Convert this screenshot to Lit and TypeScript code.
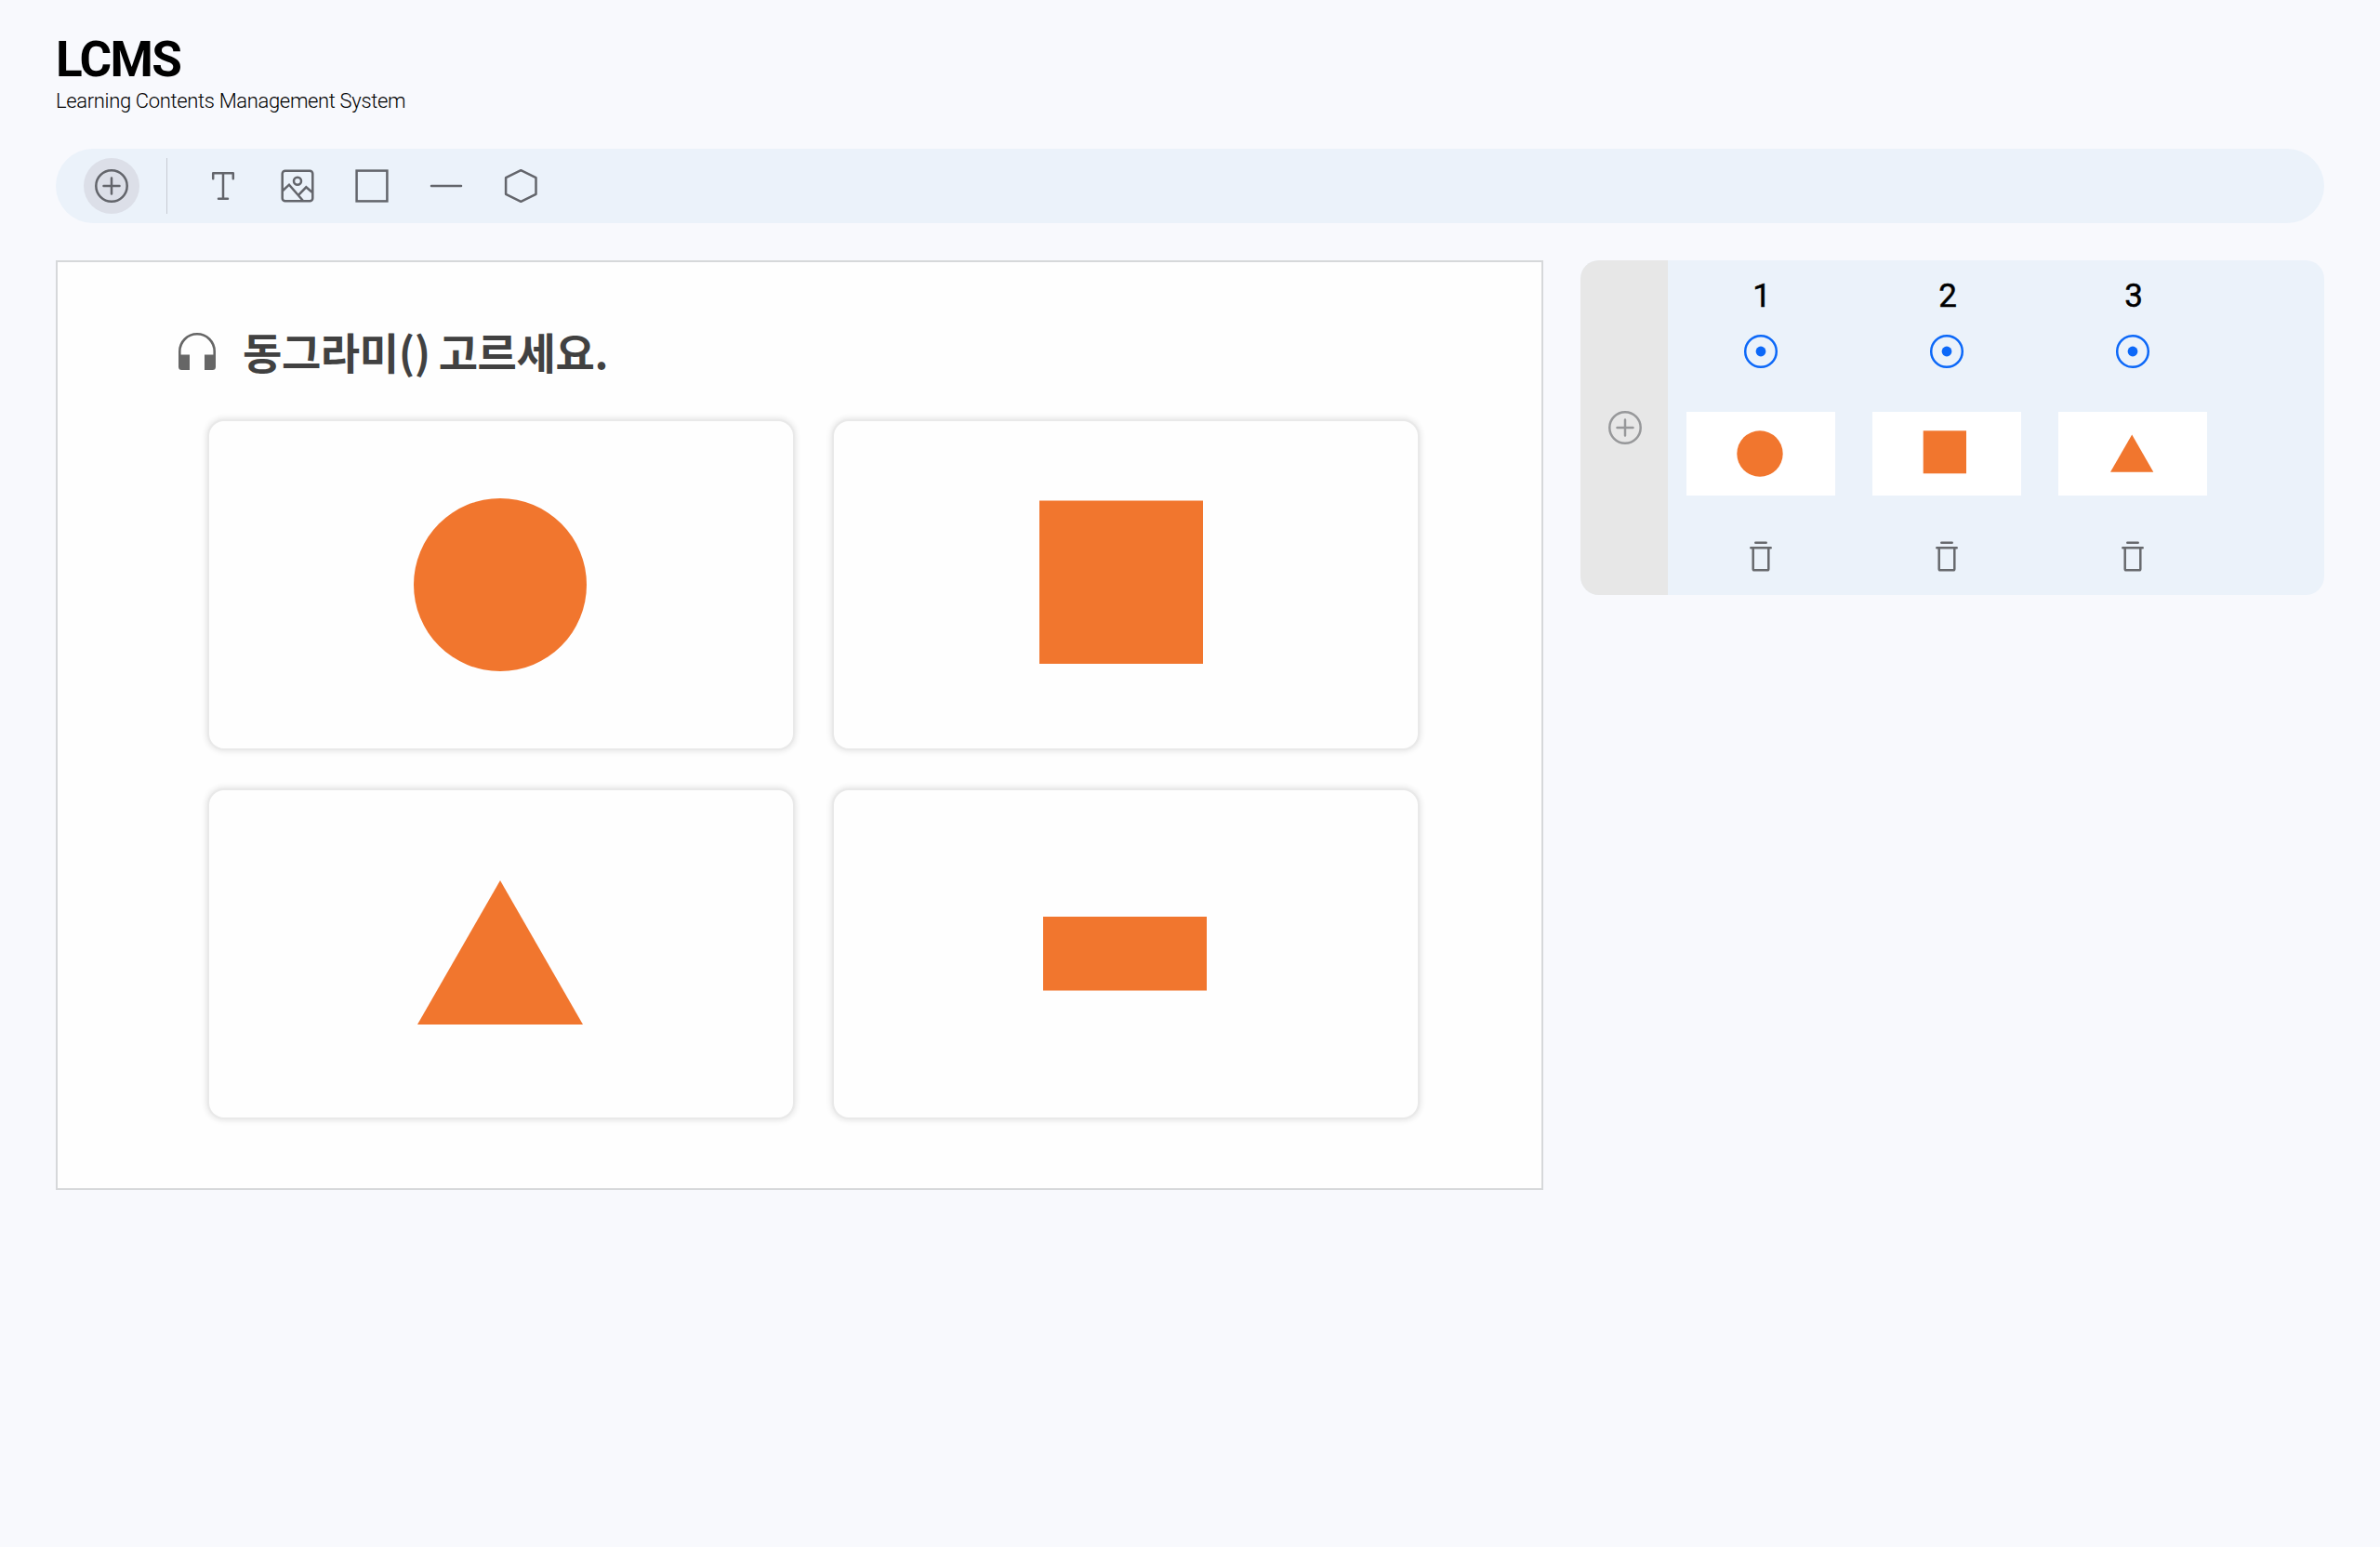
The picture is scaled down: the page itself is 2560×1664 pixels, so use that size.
import { LitElement, html, svg, css, type TemplateResult } from "lit";
import { customElement, property } from "lit/decorators.js";

type ShapeName = "circle" | "square" | "triangle" | "rect";

// Every shape is drawn inside the 628 x 352 face of an answer card.
const SHAPES: Record<ShapeName, TemplateResult> = {
  circle: svg`<circle cx="313" cy="176" r="93"/>`,
  square: svg`<rect x="221" y="85.500" width="176" height="175.500"/>`,
  triangle: svg`<path d="M313 97 402 252H224z"/>`,
  rect: svg`<rect x="225" y="136" width="176" height="79.500"/>`,
};

// Thumbnails use a 160 x 90 face of their own.
const THUMBS: Record<string, TemplateResult> = {
  circle: svg`<circle cx="79" cy="45" r="24.7"/>`,
  square: svg`<rect x="54.7" y="20.3" width="46.3" height="46"/>`,
  triangle: svg`<path d="M79.2 24.5 102.3 64.7H56z"/>`,
};

const ICONS: Record<string, TemplateResult> = {
  plus: svg`<circle cx="20" cy="20" r="16.7"/><path d="M20 11.5v17M11.5 20h17" stroke-linecap="round"/>`,
  text: svg`<path d="M9.2 12.2V6.2H30.8V12.2M20 6.2V33.8M15 33.8H25" stroke-linecap="round" stroke-linejoin="round"/>`,
  image: svg`<rect x="3.7" y="3.7" width="32.6" height="32.6" rx="3"/><circle cx="20" cy="14.7" r="4"/><path d="M4.2 25 11 18.7 25.8 35.8M21.5 29.3 29.3 21.3 36 27"/>`,
  box: svg`<rect x="3.6" y="3.6" width="32.8" height="32.8"/>`,
  line: svg`<path d="M4 20H36" stroke-linecap="round"/>`,
  hexagon: svg`<path d="M20.300 3.2 36.5 11.2V28.8L20.300 36.8 4.1 28.8V11.2z" stroke-linejoin="round"/>`,
  target: svg`<circle cx="20" cy="20" r="16.8"/><circle cx="20" cy="20" r="5.4" fill="currentColor" stroke="none"/>`,
  trash: svg`<path d="M14.3 5.7H25.7M9.3 11.2H30.7M11.7 11.4V34a1.3 1.3 0 0 0 1.3 1.3H27a1.3 1.3 0 0 0 1.3-1.3V11.4" stroke-linecap="round"/>`,
};

@customElement("lcms-icon")
export class LcmsIcon extends LitElement {
  @property() name = "plus";
  static styles = css`
    :host { display: block; width: 40px; height: 40px; }
    .glyph { display: block; width: 40px; height: 40px; fill: none; stroke: currentColor; stroke-width: 2.5; }
  `;
  render() {
    return html`<svg class="glyph" viewBox="0 0 40 40">${ICONS[this.name]}</svg>`;
  }
}

@customElement("lcms-toolbar")
export class LcmsToolbar extends LitElement {
  static styles = css`
    :host { display: block; }
    .bar {
      display: flex; align-items: center; box-sizing: border-box; height: 80px;
      padding-left: 30px; border-radius: 40px; background: #ebf2fa; color: #63656b;
    }
    .add {
      display: grid; place-items: center; width: 60px; height: 60px; padding: 0;
      border: 0; border-radius: 50%; background: #dcdfe8; color: inherit;
    }
    .divider { width: 1px; height: 60px; margin-left: 29px; background: #c8ccd3; }
    .tools { display: flex; gap: 40px; margin-left: 40px; }
    .tool { padding: 0; border: 0; background: none; color: inherit; }
  `;
  render() {
    return html`
      <div class="bar">
        <button class="add"><lcms-icon name="plus"></lcms-icon></button>
        <div class="divider"></div>
        <div class="tools">
          ${["text", "image", "box", "line", "hexagon"].map(
            (name) => html`<button class="tool"><lcms-icon name=${name}></lcms-icon></button>`,
          )}
        </div>
      </div>
    `;
  }
}

@customElement("lcms-canvas")
export class LcmsCanvas extends LitElement {
  static styles = css`
    :host { display: block; }
    .page {
      box-sizing: border-box; width: 1600px; height: 1000px; padding: 62px 0 0 130px;
      border: 2px solid #d6d8da; background: #fefefe;
    }
    .question { display: flex; align-items: center; height: 66px; }
    .headphones { display: block; width: 40px; height: 40px; margin-top: 1px; }
    .prompt {
      margin: 0 0 0 29px; color: #414141; white-space: nowrap;
      font: 700 46px/66px "Noto Sans CJK KR", sans-serif; letter-spacing: -0.4px; word-spacing: -1px;
    }
    .cards {
      display: grid; grid-template-columns: repeat(2, 628px); grid-auto-rows: 352px;
      gap: 45px 44px; margin: 43px 0 0 33px;
    }
    .card {
      border-radius: 16px; background: #fefefe;
      box-shadow: 0 0 0 2px #e9e9e9, 0 0 6px 3px rgba(0, 0, 0, 0.11);
    }
    .shape { display: block; width: 628px; height: 352px; fill: #f1762e; }
  `;
  render() {
    const shapes: ShapeName[] = ["circle", "square", "triangle", "rect"];
    return html`
      <section class="page">
        <div class="question">
          <svg class="headphones" viewBox="0 0 40 40">
            <path d="M1.3 27V20a18.7 18.7 0 0 1 37.4 0V27" fill="none" stroke="#666" stroke-width="2.6" />
            <path d="M0 23.5H12V40H3.5A3.5 3.5 0 0 1 0 36.5zM28 23.5H40V36.5A3.5 3.5 0 0 1 36.500 40H28z" fill="#666" />
          </svg>
          <h2 class="prompt">동그라미() 고르세요.</h2>
        </div>
        <div class="cards">
          ${shapes.map(
            (name) => html`<div class="card"><svg class="shape" viewBox="0 0 628 352">${SHAPES[name]}</svg></div>`,
          )}
        </div>
      </section>
    `;
  }
}

@customElement("lcms-answers")
export class LcmsAnswers extends LitElement {
  static styles = css`
    :host { display: block; }
    .panel {
      display: flex; width: 800px; height: 360px; overflow: hidden;
      border-radius: 20px; background: #ebf2fa;
    }
    .add {
      display: grid; place-items: center; width: 94px; padding: 0 0 0 1px;
      border: 0; background: #e7e7e7; color: #97989a;
    }
    .list { display: flex; gap: 40px; padding-left: 20px; }
    .answer { display: flex; flex-direction: column; align-items: center; width: 160px; }
    .number {
      margin: 18px 0 0 2px; height: 42px; color: #000;
      font: 400 35px/42px Roboto, sans-serif; -webkit-text-stroke: 0.5px #000;
    }
    .target { margin-top: 18px; color: #0c68f8; }
    .thumb { display: block; width: 160px; height: 90px; margin-top: 45px; background: #fff; fill: #f1762e; }
    .trash { margin-top: 45px; color: #67696d; }
  `;
  render() {
    return html`
      <section class="panel">
        <button class="add"><lcms-icon name="plus"></lcms-icon></button>
        <div class="list">
          ${["circle", "square", "triangle"].map(
            (shape, index) => html`
              <div class="answer">
                <div class="number">${index + 1}</div>
                <lcms-icon class="target" name="target"></lcms-icon>
                <svg class="thumb" viewBox="0 0 160 90">${THUMBS[shape]}</svg>
                <lcms-icon class="trash" name="trash"></lcms-icon>
              </div>
            `,
          )}
        </div>
      </section>
    `;
  }
}

@customElement("app-root")
export class AppRoot extends LitElement {
  static styles = css`
    :host {
      display: block; box-sizing: border-box; width: 2560px; height: 1664px;
      padding: 34px 60px 0; background: #f8f9fd; color: #000; overflow: hidden;
      font-family: Roboto, sans-serif;
    }
    .brand { height: 126px; }
    .title { margin: 0; font: 700 53px/60px Roboto, sans-serif; letter-spacing: -1.6px; }
    .subtitle { margin: 0; font: 300 22px/30px Roboto, sans-serif; letter-spacing: -0.34px; white-space: nowrap; }
    .workspace { display: flex; align-items: flex-start; gap: 40px; margin-top: 40px; }
  `;
  render() {
    return html`
      <header class="brand">
        <h1 class="title">LCMS</h1>
        <p class="subtitle">Learning Contents Management System</p>
      </header>
      <lcms-toolbar></lcms-toolbar>
      <main class="workspace">
        <lcms-canvas></lcms-canvas>
        <lcms-answers></lcms-answers>
      </main>
    `;
  }
}
